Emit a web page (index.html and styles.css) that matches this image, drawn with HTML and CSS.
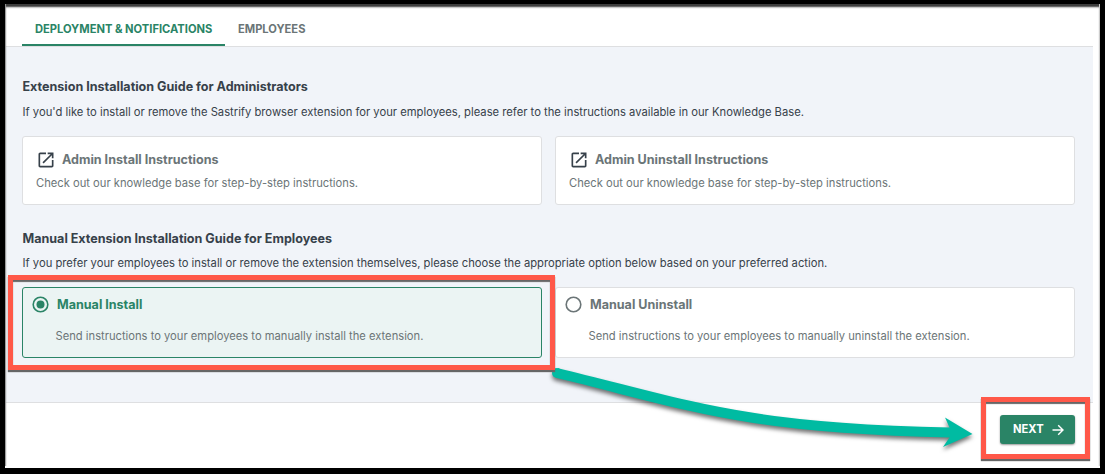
FILE: index.html
```html
<!DOCTYPE html>
<html lang="en">

<head>
    <meta charset="UTF-8">
    <meta name="viewport" content="width=device-width, initial-scale=1.0">
    <title>Extension Deployment</title>
    <link rel="stylesheet" href="styles.css">
</head>

<body>
    <div class="frame">
        <nav class="tabs">
            <a class="tab active">DEPLOYMENT &amp; NOTIFICATIONS</a>
            <a class="tab">EMPLOYEES</a>
        </nav>

        <main class="content">
            <section class="guide">
                <h2>Extension Installation Guide for Administrators</h2>
                <p class="lead">If you'd like to install or remove the Sastrify browser extension for your employees, please refer to the instructions available in our Knowledge Base.</p>
                <div class="cards">
                    <div class="card link-card">
                        <div class="card-head">
                            <svg class="icon" viewBox="0 0 24 24"><path d="M19 19H5V5h7V3H5c-1.11 0-2 .9-2 2v14c0 1.1.89 2 2 2h14c1.1 0 2-.9 2-2v-7h-2v7zM14 3v2h3.59l-9.83 9.83 1.41 1.41L19 6.41V10h2V3h-7z"/></svg>
                            <h3>Admin Install Instructions</h3>
                        </div>
                        <p>Check out our knowledge base for step-by-step instructions.</p>
                    </div>
                    <div class="card link-card">
                        <div class="card-head">
                            <svg class="icon" viewBox="0 0 24 24"><path d="M19 19H5V5h7V3H5c-1.11 0-2 .9-2 2v14c0 1.1.89 2 2 2h14c1.1 0 2-.9 2-2v-7h-2v7zM14 3v2h3.59l-9.83 9.83 1.41 1.41L19 6.41V10h2V3h-7z"/></svg>
                            <h3>Admin Uninstall Instructions</h3>
                        </div>
                        <p>Check out our knowledge base for step-by-step instructions.</p>
                    </div>
                </div>
            </section>

            <section class="guide manual">
                <h2>Manual Extension Installation Guide for Employees</h2>
                <p class="lead">If you prefer your employees to install or remove the extension themselves, please choose the appropriate option below based on your preferred action.</p>
                <div class="cards">
                    <div class="card option selected">
                        <div class="card-head">
                            <svg class="radio" viewBox="0 0 17 17"><circle class="ring" cx="8.5" cy="8.5" r="7.3"/><circle class="dot" cx="8.5" cy="8.5" r="4"/></svg>
                            <h3>Manual Install</h3>
                        </div>
                        <p>Send instructions to your employees to manually install the extension.</p>
                        <div class="highlight highlight-option"></div>
                    </div>
                    <div class="card option">
                        <div class="card-head">
                            <svg class="radio" viewBox="0 0 17 17"><circle class="ring" cx="8.5" cy="8.5" r="7.3"/></svg>
                            <h3>Manual Uninstall</h3>
                        </div>
                        <p>Send instructions to your employees to manually uninstall the extension.</p>
                    </div>
                </div>
            </section>
        </main>

        <footer class="actions">
            <div class="next-wrap">
                <button class="next">NEXT
                    <svg viewBox="0 0 12 12"><path d="M0.5 6h10.5M6.2 1.2L11 6l-4.8 4.8"/></svg>
                </button>
                <div class="highlight highlight-next"></div>
            </div>
        </footer>
    </div>

    <!-- arrow from the selected option to the button -->
    <svg class="arrow" viewBox="0 0 1105 474">
        <path class="arrow-line" d="M557 373C690 405 740 428 950 432.5"/>
        <circle class="arrow-head" cx="557" cy="373" r="5"/>
        <path class="arrow-head" d="M972.5 434L945 417.5 949.5 427.5V437.5L943 447z"/>
    </svg>
</body>

</html>
```

FILE: styles.css
```css
:root {
    --green: #2a8466;
    --text: #37414a;
    --muted: #6b7577;
    --line: #dedfe1;
    --bg: #f1f4f9;
    --red: #ff5849;
    --teal: #00bba2;
}

* {
    box-sizing: border-box;
}

body {
    margin: 0;
    font-family: Inter, "Liberation Sans", sans-serif;
    color: var(--text);
}

h2,
h3,
p {
    margin: 0;
}

.frame {
    position: relative;
    width: 1105px;
    height: 474px;
    border: solid #000;
    border-width: 4px 5px 6px 5px;
    background: #fff;
    display: flex;
    flex-direction: column;
    overflow: hidden;
}

.frame::after {
    content: '';
    position: absolute;
    inset: 0;
    box-shadow: inset 1px 0 1px #999, inset -1px 0 0 #ccc, inset 0 3px 2px #333;
    clip-path: inset(0 0 2px 0);
    pointer-events: none;
}

.tabs {
    height: 43px;
    flex: none;
    display: flex;
    margin-right: 7px;
    padding-left: 17px;
    border-bottom: 1px solid var(--line);
}

.tab {
    height: 42px;
    padding: 18px 13px 0;
    font-size: 11.15px;
    line-height: 14px;
    font-weight: 650;
    color: var(--muted);
}

.tab.active {
    width: 203px;
    color: var(--green);
    border-bottom: 2px solid var(--green);
    white-space: nowrap;
}

.content {
    height: 356px;
    flex: none;
    margin-right: 7px;
    padding: 31px 18px 0 17px;
    background: var(--bg);
    border-bottom: 1px solid var(--line);
}

h2 {
    padding-left: 0.5px;
    font-size: 12.55px;
    line-height: 18px;
    font-weight: 650;
}

.lead {
    margin-top: 9px;
    padding-left: 0.5px;
    font-size: 11.22px;
    line-height: 14px;
    white-space: nowrap;
}

.cards {
    display: grid;
    grid-template-columns: 520px 520px;
    gap: 13px;
    margin-top: 17px;
}

.card {
    position: relative;
    height: 69px;
    padding: 13px 13px 0;
    background: #fff;
    border: 1px solid var(--line);
    border-radius: 3px;
    color: var(--muted);
}

.card-head {
    display: flex;
    align-items: center;
    height: 19px;
}

.card p {
    margin-top: 7px;
    font-size: 11.2px;
    line-height: 14px;
}

h3 {
    font-size: 12.55px;
    line-height: 18px;
    font-weight: 650;
}

.icon {
    width: 20px;
    height: 20px;
    margin-right: 6px;
    fill: #37414a;
}

.manual {
    margin-top: 25px;
}

.manual .lead {
    margin-top: 8px;
}

.option {
    height: 71px;
    padding: 7px 9px 0;
}

.option p {
    margin: 15px 0 0 23.5px;
}

.radio {
    width: 17px;
    height: 17px;
    margin-right: 8px;
}

.ring {
    fill: none;
    stroke: currentColor;
    stroke-width: 1.6;
}

.dot {
    fill: currentColor;
}

.selected {
    background: #ebf4f3;
    border-color: var(--green);
}

.selected .card-head {
    color: var(--green);
}

.highlight {
    position: absolute;
    z-index: 1;
    border: 5px solid var(--red);
    box-shadow: 0 2px 1px #666, inset 0 2px 1px #666;
    pointer-events: none;
}

.highlight-option {
    inset: -13px -14px -13px -15px;
}

.actions {
    flex: 1;
    display: flex;
    justify-content: flex-end;
    padding: 12px 25px 0 0;
}

.next-wrap {
    position: relative;
    width: 75px;
    height: 29px;
}

.next {
    display: flex;
    align-items: center;
    width: 75px;
    height: 29px;
    padding: 0 0 1px 13px;
    border: 0;
    border-radius: 3px;
    background: var(--green);
    color: #fff;
    font: 650 11.2px/14px Inter, "Liberation Sans", sans-serif;
    box-shadow: 0 1px 2px rgba(0, 0, 0, 0.4);
}

.next svg {
    width: 12px;
    height: 12px;
    margin: 1px 0 0 8px;
    fill: none;
    stroke: #fff;
    stroke-width: 1.4;
}

.highlight-next {
    inset: -18px -15px -15px -19px;
}

.arrow {
    position: absolute;
    left: 0;
    top: 0;
    width: 1105px;
    height: 474px;
    filter: drop-shadow(0 3px 2px rgba(0, 0, 0, 0.55));
    pointer-events: none;
}

.arrow-line {
    fill: none;
    stroke: var(--teal);
    stroke-width: 10;
}

.arrow-head {
    fill: var(--teal);
}
```
